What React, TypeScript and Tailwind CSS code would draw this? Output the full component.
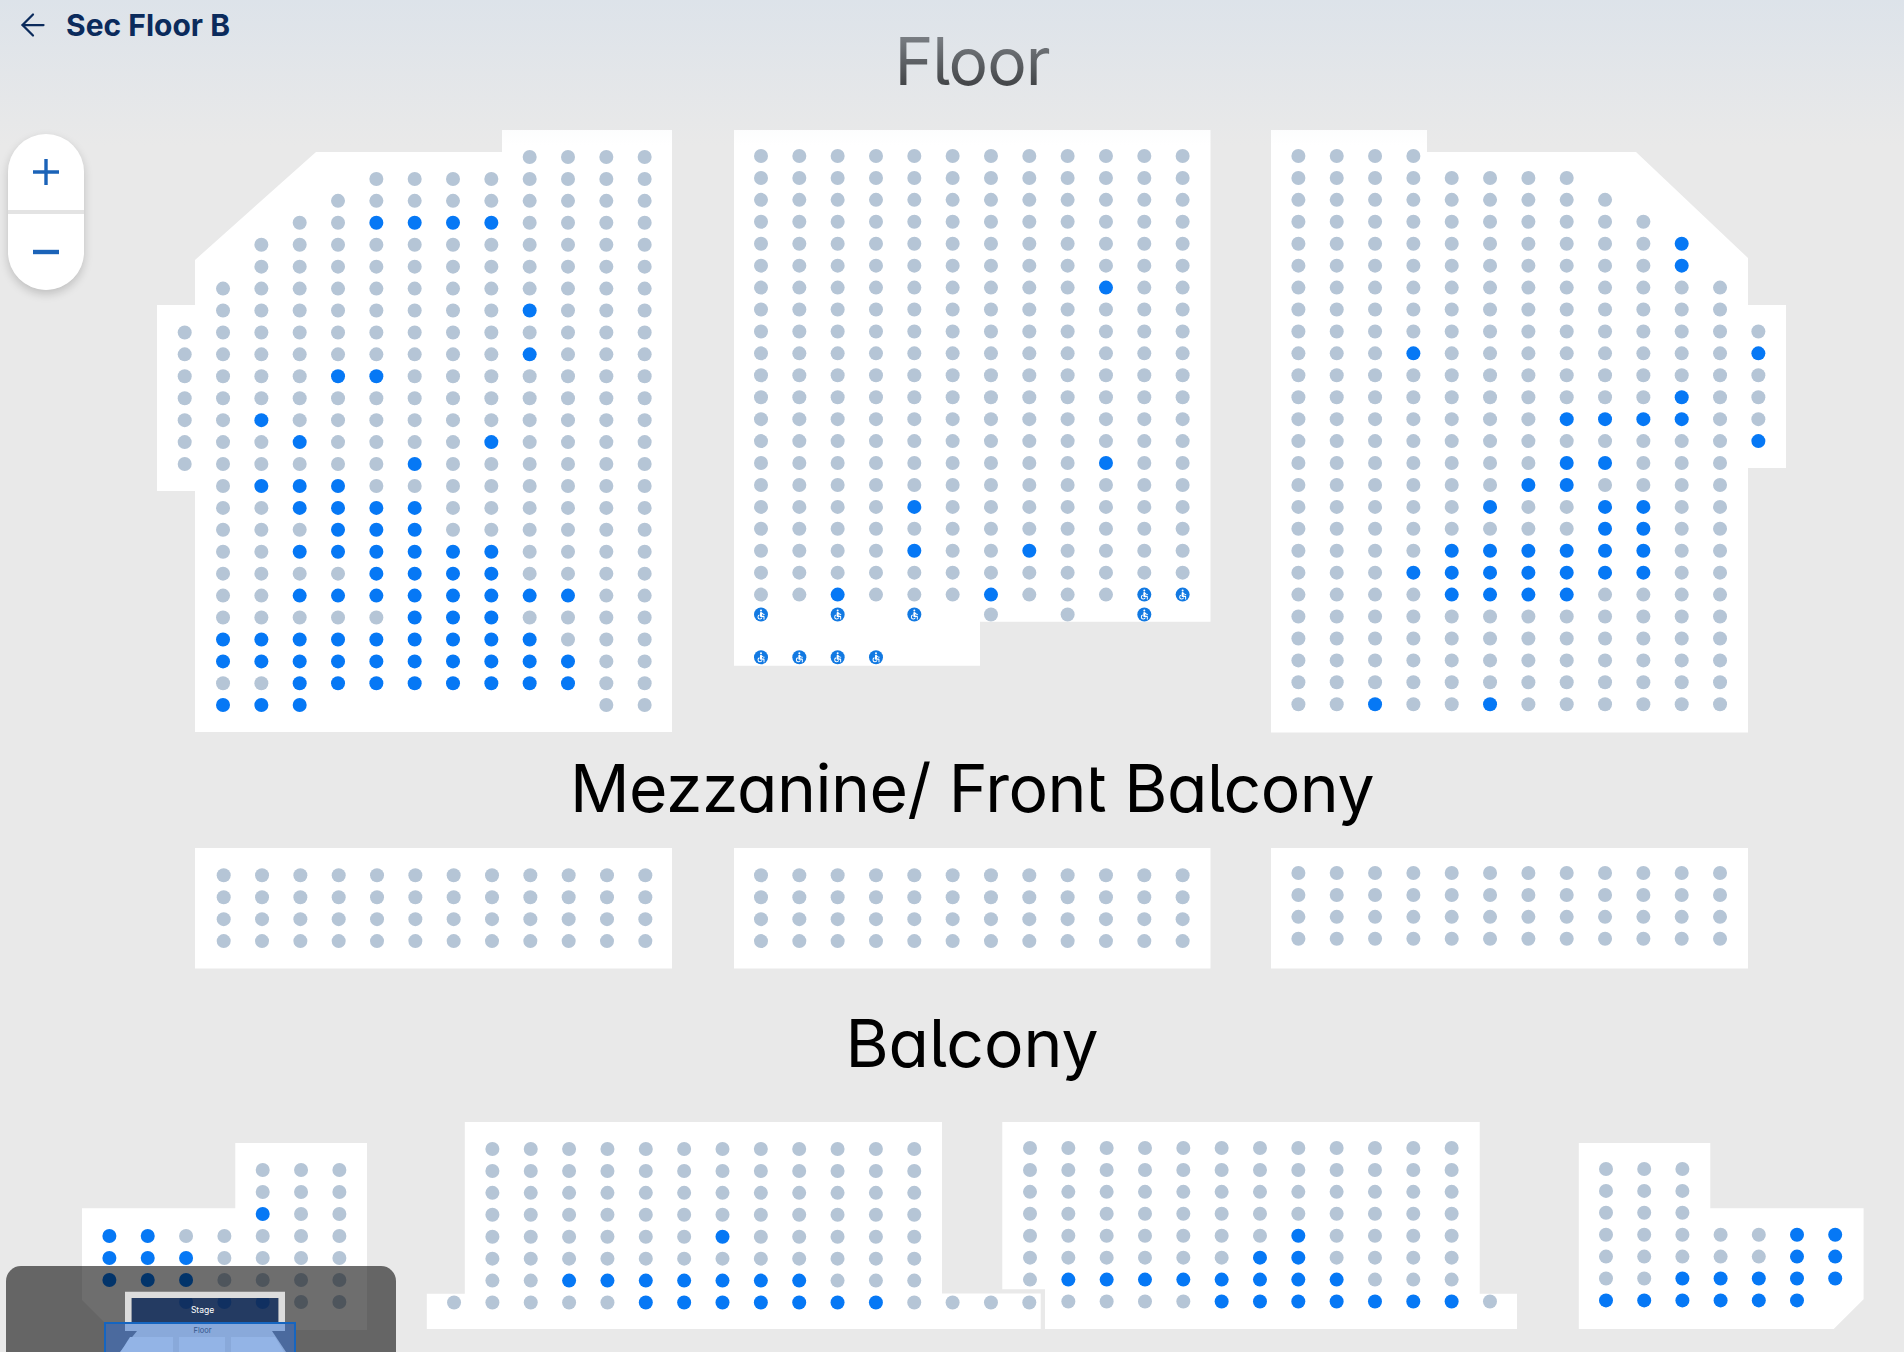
import { MdAccessible } from "react-icons/md";
import { ArrowLeft } from "lucide-react";

type Row = [number, number, number[]?, number[]?];
type Block = { x0: number; y0: number; dx?: number; dy?: number; rows: Row[] };

const GREY = "#b5c5d6";
const BLUE = "#0678f5";

const span = (a: number, b: number) => Array.from({ length: b - a + 1 }, (_, i) => a + i);
const rep = (n: number, r: Row): Row[] => Array.from({ length: n }, () => r);

function Seat({ cx, cy, kind }: { cx: number; cy: number; kind: "g" | "b" | "w" }) {
  if (kind === "w") {
    return (
      <g>
        <circle cx={cx} cy={cy} r={7} fill="#1279e2" />
        <MdAccessible x={cx - 6} y={cy - 6} size={12} color="#ffffff" />
      </g>
    );
  }
  return <circle cx={cx} cy={cy} r={7} fill={kind === "b" ? BLUE : GREY} />;
}

function Seats({ block }: { block: Block }) {
  const { x0, y0, dx = 38.33, dy = 21.93, rows } = block;
  return (
    <>
      {rows.flatMap((row, r) => {
        const [a, b, blue = [], wheel = []] = row;
        return span(a, b).map((c) => (
          <Seat
            key={`${r}-${c}`}
            cx={x0 + c * dx}
            cy={y0 + r * dy}
            kind={wheel.includes(c) ? "w" : blue.includes(c) ? "b" : "g"}
          />
        ));
      })}
    </>
  );
}

const floorLeft: Block = {
  x0: 184.7,
  y0: 157,
  rows: [
    [9, 12],
    [5, 12],
    [4, 12],
    [3, 12, [5, 6, 7, 8]],
    [2, 12],
    [2, 12],
    [1, 12],
    [1, 12, [9]],
    [0, 12],
    [0, 12, [9]],
    [0, 12, [4, 5]],
    [0, 12],
    [0, 12, [2]],
    [0, 12, [3, 8]],
    [0, 12, [6]],
    [1, 12, [2, 3, 4]],
    [1, 12, [3, 4, 5, 6]],
    [1, 12, [4, 5, 6]],
    [1, 12, span(3, 8)],
    [1, 12, span(5, 8)],
    [1, 12, span(3, 10)],
    [1, 12, [6, 7, 8]],
    [1, 12, span(1, 9)],
    [1, 12, span(1, 10)],
    [1, 12, span(3, 10)],
  ],
};
const floorLeftLast: Block = { x0: 184.7, y0: 705, rows: [[1, 3, [1, 2, 3]]] };
const floorLeftLast2: Block = { x0: 184.7, y0: 705, rows: [[11, 12]] };

const floorCenter: Block = {
  x0: 761,
  y0: 156,
  rows: [
    ...rep(6, [0, 11]),
    [0, 11, [9]],
    ...rep(7, [0, 11]),
    [0, 11, [9]],
    [0, 11],
    [0, 11, [4]],
    [0, 11],
    [0, 11, [4, 7]],
    [0, 11],
    [0, 11, [2, 6], [10, 11]],
  ],
};

const floorRight: Block = {
  x0: 1298.4,
  y0: 156,
  rows: [
    [0, 3],
    [0, 7],
    [0, 8],
    [0, 9],
    [0, 10, [10]],
    [0, 10, [10]],
    [0, 11],
    [0, 11],
    [0, 12],
    [0, 12, [3, 12]],
    [0, 12],
    [0, 12, [10]],
    [0, 12, [7, 8, 9, 10]],
    [0, 12, [12]],
    [0, 11, [7, 8]],
    [0, 11, [6, 7]],
    [0, 11, [5, 8, 9]],
    [0, 11, [8, 9]],
    [0, 11, span(4, 9)],
    [0, 11, span(3, 9)],
    [0, 11, span(4, 7)],
    ...rep(4, [0, 11]),
    [0, 11, [2, 5]],
  ],
};

const balconyLeft: Block = {
  x0: 109.4,
  y0: 1170,
  dy: 22,
  rows: [
    [4, 6],
    [4, 6],
    [4, 6, [4]],
    [0, 6, [0, 1]],
    [0, 6, [0, 1, 2]],
    [0, 6, [0, 1, 2]],
    [2, 6, [2, 3, 4]],
  ],
};
const balconyCL: Block = {
  x0: 492.4,
  y0: 1149,
  dx: 38.35,
  rows: [
    ...rep(4, [0, 11]),
    [0, 11, [6]],
    [0, 11],
    [0, 11, span(2, 8)],
    [-1, 14, span(4, 10)],
  ],
};
const balconyCR: Block = {
  x0: 1030,
  y0: 1148,
  rows: [
    ...rep(4, [0, 11]),
    [0, 11, [7]],
    [0, 11, [6, 7]],
    [0, 11, span(1, 8)],
    [1, 12, span(5, 11)],
  ],
};
const balconyRight: Block = {
  x0: 1606,
  y0: 1169,
  dx: 38.2,
  dy: 21.9,
  rows: [
    [0, 2],
    [0, 2],
    [0, 2],
    [0, 6, [5, 6]],
    [0, 6, [5, 6]],
    [0, 6, span(2, 6)],
    [0, 5, span(0, 5)],
  ],
};

function Panel({ points }: { points: string }) {
  return <polygon points={points} fill="#ffffff" />;
}

const headingClass =
  "pl-[40px] text-center text-[66px] leading-none font-normal text-black [font-family:Inter,sans-serif] [font-feature-settings:'cv11','ss01','ss02','ss03','salt']";

export default function App() {
  return (
    <div className="relative w-[1904px] h-[1352px] overflow-hidden bg-[#e9e9e9]">
      <main className="flex flex-col">
        <div className="h-[130px] pt-[28px]">
          <h2 className={`${headingClass} tracking-[-1px]`}>Floor</h2>
        </div>
        <svg className="block h-[603px] w-[1904px]" viewBox="0 130 1904 603">
          <Panel points="502,130 672,130 672,732 195,732 195,491 157,491 157,305 195,305 195,260 316,152 502,152" />
          <Panel points="734,130 1210.5,130 1210.5,621.7 980,621.7 980,665.7 734,665.7" />
          <Panel points="1271,130 1427,130 1427,152 1636,152 1748,258 1748,305 1786,305 1786,468 1748,468 1748,732.5 1271,732.5" />
          <Seats block={floorLeft} />
          <Seats block={floorLeftLast} />
          <Seats block={floorLeftLast2} />
          <Seats block={floorCenter} />
          <Seats block={{ x0: 761, y0: 614.5, dx: 76.66, rows: [[0, 5, [], [0, 1, 2, 5]]] }} />
          <Seats block={{ x0: 761, y0: 657.3, rows: [[0, 3, [], [0, 1, 2, 3]]] }} />
          <Seats block={floorRight} />
        </svg>
        <div className="h-[115px] pt-[22px]">
          <h2 className={`${headingClass} tracking-[-0.5px]`}>Mezzanine/ Front Balcony</h2>
        </div>
        <svg className="block h-[121px] w-[1904px]" viewBox="0 848 1904 121">
          <Panel points="195,848 672,848 672,968.5 195,968.5" />
          <Panel points="734,848 1210.5,848 1210.5,968.5 734,968.5" />
          <Panel points="1271,848 1748,848 1748,968.5 1271,968.5" />
          <Seats block={{ x0: 223.7, y0: 875.3, rows: rep(4, [0, 11]) }} />
          <Seats block={{ x0: 761, y0: 875.3, rows: rep(4, [0, 11]) }} />
          <Seats block={{ x0: 1298.4, y0: 873, rows: rep(4, [0, 11]) }} />
        </svg>
        <div className="h-[153px] pt-[41px]">
          <h2 className={headingClass}>Balcony</h2>
        </div>
        <svg className="block h-[230px] w-[1904px]" viewBox="0 1122 1904 230">
          <Panel points="235.3,1143 367,1143 367,1330 112,1330 82,1300 82,1208.3 235.3,1208.3" />
          <Panel points="464.8,1122 942,1122 942,1293.5 1040.7,1293.5 1040.7,1329 426.8,1329 426.8,1293.7 464.8,1293.7" />
          <Panel points="1002.3,1122 1479.7,1122 1479.7,1293.7 1517,1293.7 1517,1329 1045,1329 1045,1289.3 1002.3,1289.3" />
          <Panel points="1578.8,1143 1710.3,1143 1710.3,1208.3 1863.6,1208.3 1863.6,1299.3 1833.7,1329 1578.8,1329" />
          <Seats block={balconyLeft} />
          <Seats block={balconyCL} />
          <Seats block={balconyCR} />
          <Seats block={balconyRight} />
        </svg>
      </main>

      {/* top fade, lies over the heading */}
      <div className="pointer-events-none absolute inset-x-0 top-0 h-[145px] bg-linear-to-b from-[rgba(217,225,234,0.75)] to-[rgba(217,225,234,0)]" />

      {/* header */}
      <div className="absolute left-[15px] top-[7px] flex items-center gap-[15px] text-[#0b2b5c]">
        <ArrowLeft size={36} strokeWidth={1.5} />
        <span className="text-[30px] leading-[36px] font-bold [font-family:Inter,sans-serif]">Sec Floor B</span>
      </div>

      {/* zoom control */}
      <div className="absolute left-[8px] top-[134px] flex w-[76px] flex-col gap-[4px] rounded-[38px] bg-[#e3e3e3] shadow-[0_4px_10px_rgba(0,0,0,0.18)]">
        <button className="flex h-[76px] items-center justify-center rounded-t-[38px] bg-white text-[#1b63b8]">
          <svg width="26" height="26" viewBox="0 0 26 26">
            <path d="M13 0v26M0 13h26" stroke="currentColor" strokeWidth="3.4" fill="none" />
          </svg>
        </button>
        <button className="flex h-[76px] items-center justify-center rounded-b-[38px] bg-white text-[#1b63b8]">
          <svg width="26" height="26" viewBox="0 0 26 26">
            <path d="M0 13h26" stroke="currentColor" strokeWidth="4.4" fill="none" />
          </svg>
        </button>
      </div>

      {/* minimap */}
      <div className="absolute left-[6px] top-[1266px] h-[100px] w-[390px] overflow-hidden rounded-[15px] bg-[rgba(0,0,0,0.57)]">
        <svg className="block h-[100px] w-[390px]" viewBox="6 1266 390 100">
          <path
            fillRule="evenodd"
            d="M125 1291.7h160v40h-160zM131.7 1298v24h146.6v-24z"
            fill="#dcdcdc"
          />
          <rect x="131.7" y="1298" width="146.6" height="24" fill="#13305f" fillOpacity="0.82" />
          <text x="202.5" y="1313" textAnchor="middle" fontSize="8.5" fill="#ffffff" fontFamily="Inter, sans-serif">
            Stage
          </text>
          <rect x="105" y="1323" width="190" height="40" fill="#4b6a9e" stroke="#1565c0" strokeWidth="2" />
          <rect x="125" y="1324" width="160" height="7" fill="#89a9da" />
          <polygon points="137,1331 272,1331 286,1352 120,1352" fill="#89a9da" />
          <polygon points="130,1337 173,1337 173,1352 120.5,1352" fill="#93b4e6" />
          <rect x="179" y="1337" width="46" height="15" fill="#93b4e6" />
          <polygon points="231,1337 275,1337 284,1352 231,1352" fill="#93b4e6" />
          <text x="202.5" y="1333" textAnchor="middle" fontSize="7.5" fill="#34568c" fontFamily="Inter, sans-serif">
            Floor
          </text>
        </svg>
      </div>
    </div>
  );
}
